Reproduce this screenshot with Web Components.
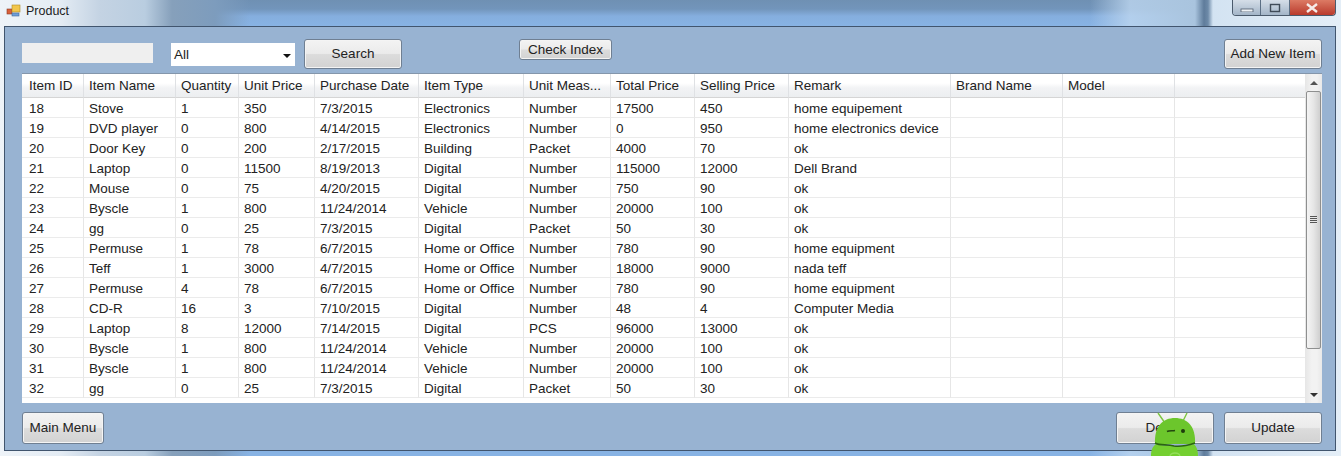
<!DOCTYPE html>
<html>
<head>
<meta charset="utf-8">
<title>Product</title>
<style>
  html, body { margin: 0; padding: 0; }
  body { width: 1341px; height: 456px; overflow: hidden; font-family: "Liberation Sans", Arial, sans-serif; font-size: 13.5px; color: #222; }
</style>
</head>
<body>
<product-window></product-window>

<script>
// columns of the grid: label, width
const COLUMNS = [
  ['Item ID', 61], ['Item Name', 92], ['Quantity', 63], ['Unit Price', 76],
  ['Purchase Date', 104], ['Item Type', 105], ['Unit Meas...', 87], ['Total Price', 84],
  ['Selling Price', 94], ['Remark', 162], ['Brand Name', 112], ['Model', 112]
];

const ROWS = [
  ['18', 'Stove', '1', '350', '7/3/2015', 'Electronics', 'Number', '17500', '450', 'home equipement'],
  ['19', 'DVD player', '0', '800', '4/14/2015', 'Electronics', 'Number', '0', '950', 'home electronics device'],
  ['20', 'Door Key', '0', '200', '2/17/2015', 'Building', 'Packet', '4000', '70', 'ok'],
  ['21', 'Laptop', '0', '11500', '8/19/2013', 'Digital', 'Number', '115000', '12000', 'Dell Brand'],
  ['22', 'Mouse', '0', '75', '4/20/2015', 'Digital', 'Number', '750', '90', 'ok'],
  ['23', 'Byscle', '1', '800', '11/24/2014', 'Vehicle', 'Number', '20000', '100', 'ok'],
  ['24', 'gg', '0', '25', '7/3/2015', 'Digital', 'Packet', '50', '30', 'ok'],
  ['25', 'Permuse', '1', '78', '6/7/2015', 'Home or Office', 'Number', '780', '90', 'home equipment'],
  ['26', 'Teff', '1', '3000', '4/7/2015', 'Home or Office', 'Number', '18000', '9000', 'nada teff'],
  ['27', 'Permuse', '4', '78', '6/7/2015', 'Home or Office', 'Number', '780', '90', 'home equipment'],
  ['28', 'CD-R', '16', '3', '7/10/2015', 'Digital', 'Number', '48', '4', 'Computer Media'],
  ['29', 'Laptop', '8', '12000', '7/14/2015', 'Digital', 'PCS', '96000', '13000', 'ok'],
  ['30', 'Byscle', '1', '800', '11/24/2014', 'Vehicle', 'Number', '20000', '100', 'ok'],
  ['31', 'Byscle', '1', '800', '11/24/2014', 'Vehicle', 'Number', '20000', '100', 'ok'],
  ['32', 'gg', '0', '25', '7/3/2015', 'Digital', 'Packet', '50', '30', 'ok']
];

class WinButton extends HTMLElement {
  constructor() {
    super();
    this.attachShadow({ mode: 'open' });
    this.shadowRoot.innerHTML = `
      <style>
        :host { display: flex; align-items: center; justify-content: center; box-sizing: border-box; width: 98px; height: 30px; flex: none; padding-bottom: 1px;
          border: 1px solid #6f7f92; border-radius: 3px; color: #222; font-size: 13.5px;
          background: linear-gradient(#f3f3f3 0%, #ebebeb 48%, #dcdcdc 52%, #d2d2d2 100%); box-shadow: inset 0 0 0 1px #f4f4f4; }
      </style>
      <slot></slot>`;
  }
}

class SearchBox extends HTMLElement {
  constructor() {
    super();
    this.attachShadow({ mode: 'open' });
    this.shadowRoot.innerHTML = `
      <style>
        :host { display: block; box-sizing: border-box; width: 131px; height: 20px; flex: none; background: #efefef; }
      </style>`;
  }
}

class ComboBox extends HTMLElement {
  constructor() {
    super();
    this.attachShadow({ mode: 'open' });
    this.shadowRoot.innerHTML = `
      <style>
        :host { display: flex; align-items: center; justify-content: space-between; box-sizing: border-box; width: 124px; height: 23px; flex: none;
          background: #fff; padding: 0 3px; font-size: 13.5px; color: #222; }
        i { width: 0; height: 0; border: 4px solid transparent; border-top-color: #111; border-bottom: 0; margin: 2px 1px 0 0; }
      </style>
      <slot></slot><i></i>`;
  }
}

class GridScrollbar extends HTMLElement {
  constructor() {
    super();
    this.attachShadow({ mode: 'open' });
    this.shadowRoot.innerHTML = `
      <style>
        :host { display: grid; grid-template-rows: 17px 258px 1fr 17px; box-sizing: border-box; width: 17px; flex: none;
          background: linear-gradient(90deg, #e6e6e6, #f2f2f2 40%, #f2f2f2 70%, #e8e8e8); }
        .end { display: flex; align-items: center; justify-content: center; }
        .up { width: 0; height: 0; border: 4px solid transparent; border-bottom-color: #555; border-top: 0; }
        .down { width: 0; height: 0; border: 4px solid transparent; border-top-color: #333; border-bottom: 0; }
        .thumb { display: flex; align-items: center; justify-content: center; margin: 0 1px; border: 1px solid #8e8f8f; border-radius: 2px;
          background: linear-gradient(90deg, #f4f4f4, #e6e6e6 50%, #cfcfcf); }
        .grip { width: 7px; height: 8px; background: repeating-linear-gradient(#555 0 1px, #e8e8e8 1px 2px); }
      </style>
      <div class="end"><span class="up"></span></div>
      <div class="thumb"><span class="grip"></span></div>
      <div></div>
      <div class="end"><span class="down"></span></div>`;
  }
}

class DataGrid extends HTMLElement {
  constructor() {
    super();
    this.attachShadow({ mode: 'open' });
    const cols = COLUMNS.map(c => c[1] + 'px').join(' ') + ' 1fr';
    const head = COLUMNS.map(c => `<div class="th">${c[0]}</div>`).join('') + '<div class="th"></div>';
    const body = ROWS.map(r => {
      let cells = '';
      for (let i = 0; i < COLUMNS.length; i++) cells += `<div class="td">${r[i] || ''}</div>`;
      return cells + '<div class="td"></div>';
    }).join('');
    this.shadowRoot.innerHTML = `
      <style>
        :host { display: flex; box-sizing: border-box; height: 330px; background: #fff; border-top: 1px solid #8496ab; font-size: 13.5px; color: #222; }
        .table { flex: 1; min-width: 0; display: grid; grid-template-columns: ${cols}; grid-template-rows: 24px repeat(15, 20px); align-content: start; overflow: hidden; }
        .th, .td { box-sizing: border-box; display: flex; align-items: center; padding-left: 5px; white-space: nowrap; overflow: hidden; border-left: 1px solid #e6e6e6; }
        .th { background: linear-gradient(#fff 0%, #fff 40%, #f2f3f5 60%, #eceef0 100%); border-bottom: 1px solid #d5d5d5; border-left-color: #dfe1e4; }
        .td { border-bottom: 1px solid #ebebeb; padding-top: 2px; }
        .th:nth-child(13n+1), .td:nth-child(13n+1) { border-left: 0; padding-left: 7px; }
      </style>
      <div class="table">${head}${body}</div>
      <grid-scrollbar></grid-scrollbar>`;
  }
}

class AndroidBadge extends HTMLElement {
  constructor() {
    super();
    this.attachShadow({ mode: 'open' });
    this.shadowRoot.innerHTML = `
      <style>
        :host { position: absolute; left: 1148px; top: 411px; width: 52px; height: 45px; display: block; }
        svg { display: block; }
      </style>
      <svg width="52" height="45" viewBox="0 0 52 45">
        <path d="M10 2 L17 12 M39 2 L34 12" stroke="#7cc540" stroke-width="1.4" fill="none"/>
        <path d="M7 33 C6 15 15 7 27 7 C39 7 48 15 47 33 Z" fill="#6cc62c"/>
        <path d="M3 45 C3 40 4 36 8 33 C18 36 36 36 46 33 C49 36 50 40 50 45 Z" fill="#74cf30"/>
        <path d="M7 32 C12 35 19 33 26 35 C33 36 41 34 47 32" stroke="#2a6410" stroke-width="1.6" fill="none"/>
        <path d="M19 20.5 C21 19.5 25 20 27 19.5" stroke="#23480f" stroke-width="1.6" fill="none"/>
        <circle cx="35" cy="20" r="2" fill="#1e3d0c"/>
        <path d="M22 45 C23 41 31 41 32 45" stroke="#93de5a" stroke-width="1.4" fill="none"/>
      </svg>`;
  }
}

class ProductWindow extends HTMLElement {
  constructor() {
    super();
    this.attachShadow({ mode: 'open' });
    this.shadowRoot.innerHTML = `
      <style>
        :host { display: block; width: 1341px; height: 456px; position: relative; overflow: hidden;
          background:
            linear-gradient(90deg, #eef3f8 0, #e4ecf4 60px, #c4d3e3 100px, #b9cde0 145px, #86a0bb 172px, #7d9cbd 215px, rgba(130,170,215,0) 250px),
            linear-gradient(90deg, rgba(190,215,240,0) 1090px, rgba(190,215,240,.8) 1130px, #a9c4de 1195px, #5f7c9b 1204px, #6d8aa8 1208px, #d3e3f2 1213px, #e4eef7 1341px),
            linear-gradient(#6f90b3 0, #7295bb 9px, #85aede 16px, #88b3e4 26px);
        }
        .title { box-sizing: border-box; height: 26px; display: flex; padding: 3px 5px 0 6px; gap: 5px; font-size: 12.5px; color: #222; position: relative; }
        .title span { margin-top: 1px; }
        .caption { margin-left: auto; margin-top: -3px; display: flex; height: 15px; width: 102px; border: 1px solid #4a5a6c; border-top: 0; border-radius: 0 0 4px 4px; overflow: hidden; }
        .caption b { display: flex; align-items: center; justify-content: center; flex: 28; border-right: 1px solid #5b6f84; background: linear-gradient(#d5dee8, #a3b5c8); }
        .caption b:last-child { flex: 46; border: 0; background: linear-gradient(#dc7a64, #b93a2c); }
        .client { box-sizing: border-box; position: absolute; left: 4px; right: 5px; top: 26px; bottom: 5px; background: #98b3d2; border: 1px solid #41556e;
          padding: 12px 13px 0 17px; display: flex; flex-direction: column; }
        .top { display: flex; align-items: flex-start; height: 34px; margin-bottom: 0; }
        .bottom { display: flex; margin-top: 9px; gap: 10px; }
        .spacer { flex: 1; }
      </style>
      <div class="title">
        <svg width="15" height="15" viewBox="0 0 15 15" style="flex:none">
          <rect x="1" y="6" width="5" height="5" fill="#d9603b" stroke="#8a3a22" stroke-width=".6"/>
          <rect x="6" y="2" width="8" height="7" fill="#f2c64c" stroke="#b08a25" stroke-width=".6"/>
          <rect x="6" y="10" width="7" height="3" fill="#6f9fd8" stroke="#44689a" stroke-width=".6"/>
        </svg>
        <span>Product</span>
        <div class="caption">
          <b><svg width="14" height="8"><rect x="1" y="5" width="12" height="3" fill="#eef2f6" stroke="#4d5b6b" stroke-width=".8"/></svg></b>
          <b><svg width="12" height="10"><rect x="1.5" y="1.5" width="9" height="7" fill="none" stroke="#3f4b58" stroke-width="1.4"/></svg></b>
          <b><svg width="14" height="10"><path d="M2 1 L12 9 M12 1 L2 9" stroke="#f6ece9" stroke-width="2.4"/></svg></b>
        </div>
      </div>
      <div class="client">
        <div class="top">
          <search-box style="margin:4px 18px 0 0"></search-box>
          <combo-box style="margin:4px 9px 0 0">All</combo-box>
          <win-button>Search</win-button>
          <win-button style="width:93px;height:21px;margin-left:117px">Check Index</win-button>
          <div class="spacer"></div>
          <win-button>Add New Item</win-button>
        </div>
        <data-grid></data-grid>
        <div class="bottom">
          <win-button style="width:82px;height:32px">Main Menu</win-button>
          <div class="spacer"></div>
          <win-button style="height:32px">Delete</win-button>
          <win-button style="height:32px">Update</win-button>
        </div>
      </div>
      <android-badge></android-badge>`;
  }
}

customElements.define('win-button', WinButton);
customElements.define('search-box', SearchBox);
customElements.define('combo-box', ComboBox);
customElements.define('grid-scrollbar', GridScrollbar);
customElements.define('data-grid', DataGrid);
customElements.define('android-badge', AndroidBadge);
customElements.define('product-window', ProductWindow);
</script>
</body>
</html>
